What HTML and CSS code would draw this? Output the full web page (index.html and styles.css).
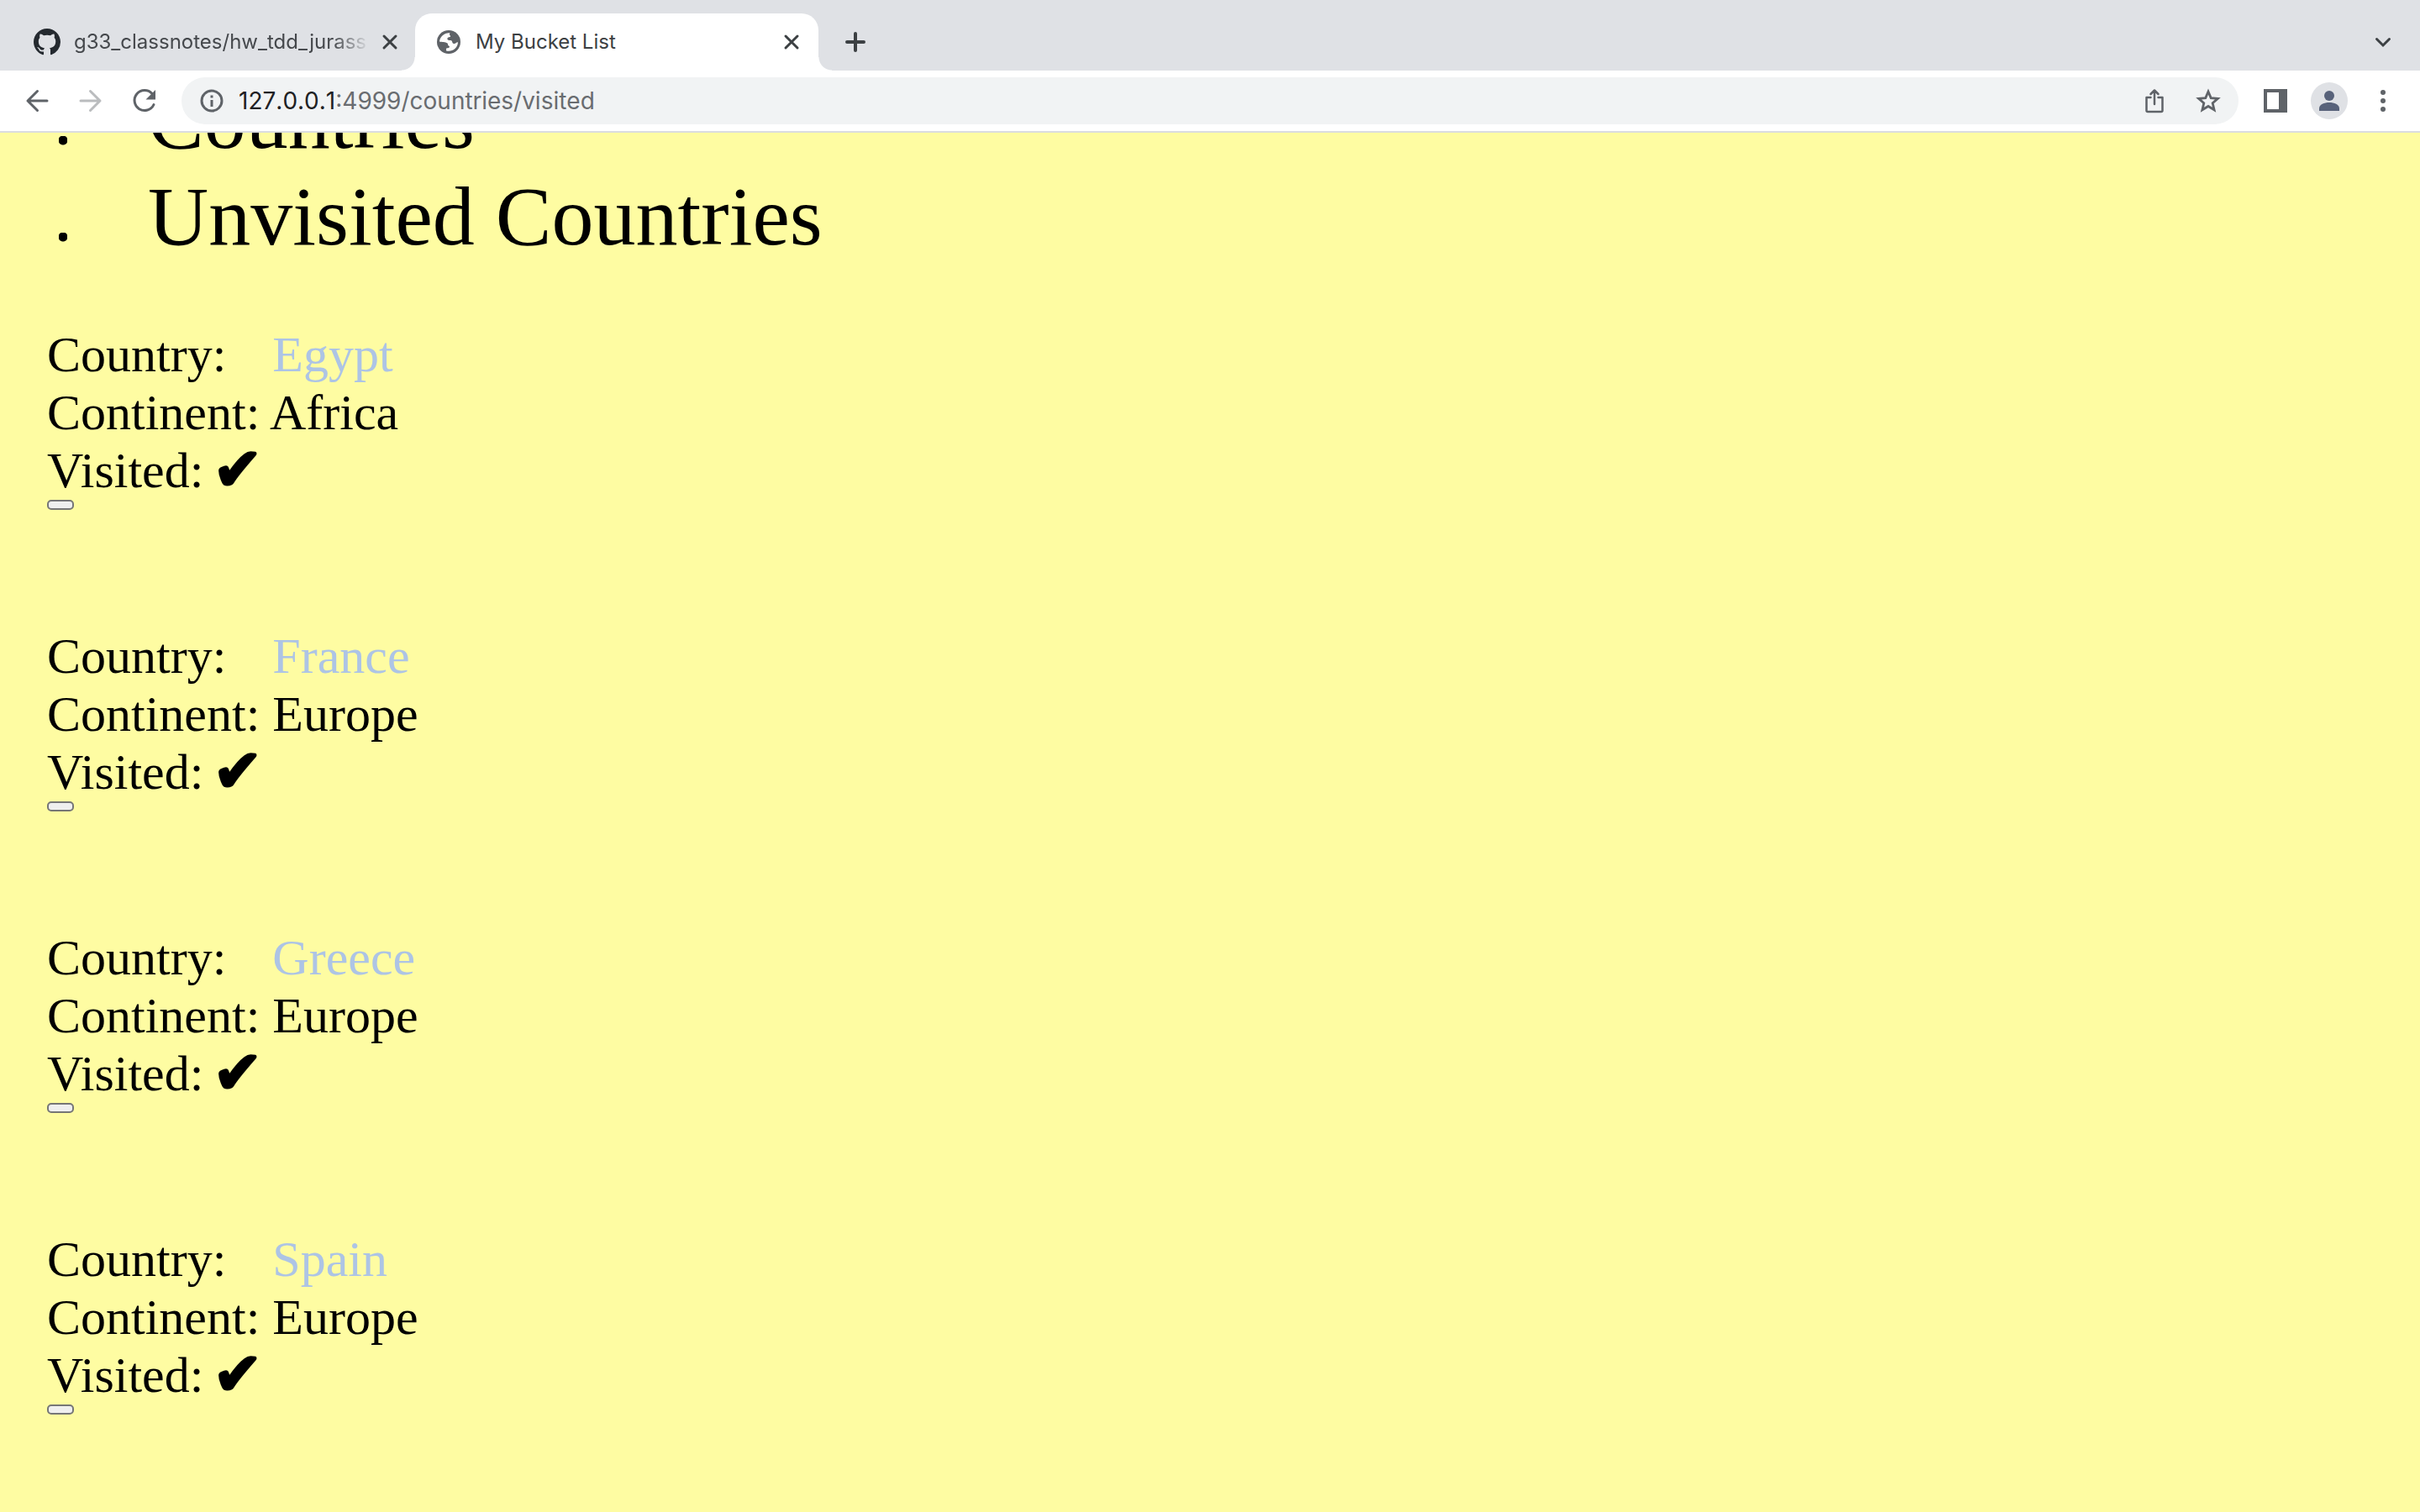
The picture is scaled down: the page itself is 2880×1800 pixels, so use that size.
FILE: index.html
```html
<!DOCTYPE html>
<html lang="en">
<head>
<meta charset="utf-8">
<title>My Bucket List</title>
<link rel="stylesheet" href="styles.css">
</head>
<body>
<header class="browser">
  <div class="tabs">
    <div class="tab">
      <svg class="icon" viewBox="0 0 16 16" fill="#24292f"><path d="M8 0C3.58 0 0 3.58 0 8c0 3.54 2.29 6.53 5.47 7.59.4.07.55-.17.55-.38 0-.19-.01-.82-.01-1.49-2.01.37-2.53-.49-2.69-.94-.09-.23-.48-.94-.82-1.13-.28-.15-.68-.52-.01-.53.63-.01 1.08.58 1.23.82.72 1.21 1.87.87 2.33.66.07-.52.28-.87.51-1.07-1.78-.2-3.64-.89-3.64-3.95 0-.87.31-1.59.82-2.15-.08-.2-.36-1.02.08-2.12 0 0 .67-.21 2.2.82.64-.18 1.32-.27 2-.27s1.36.09 2 .27c1.53-1.04 2.2-.82 2.2-.82.44 1.1.16 1.92.08 2.12.51.56.82 1.27.82 2.15 0 3.07-1.87 3.75-3.65 3.95.29.25.54.73.54 1.48 0 1.07-.01 1.93-.01 2.2 0 .21.15.46.55.38A8.01 8.01 0 0 0 16 8c0-4.42-3.58-8-8-8z"/></svg>
      <span class="tab-title fade">g33_classnotes/hw_tdd_jurass</span>
      <button class="tool" aria-label="Close tab"><svg class="icon" viewBox="0 0 32 32" stroke="#3c4043" stroke-width="3" stroke-linecap="round"><path d="M9 9l14 14M23 9L9 23"/></svg></button>
    </div>
    <div class="tab active">
      <svg class="icon" viewBox="0 0 32 32"><circle cx="16" cy="16" r="14" fill="#5f6368"/><path fill="#fff" d="M17.500 5.200C11.500 4.500 5.500 9 5 15.500C8 16.500 12 15.500 14.500 17.500C15.500 18.500 14.500 20 16 20.500C17.500 21 17 22.500 16 23C14.500 23.300 12.800 23 13 24.500C12.900 25.500 12.900 26 13.200 26.400C19.500 28 26.500 24 27 16.500C25.500 15.500 25 18 22.500 18C20 18 20.500 15.500 19.500 14.500C18.500 13.500 15.500 14.500 14.500 13C14 11.500 15 10.500 16.500 10.300C18 10.200 18.500 9.500 17.800 8.500C17 7.500 16.500 6.500 17.500 5.200Z"/></svg>
      <span class="tab-title">My Bucket List</span>
      <button class="tool" aria-label="Close tab"><svg class="icon" viewBox="0 0 32 32" stroke="#3c4043" stroke-width="3" stroke-linecap="round"><path d="M9 9l14 14M23 9L9 23"/></svg></button>
    </div>
    <button class="tool new-tab" aria-label="New tab"><svg class="icon" viewBox="0 0 32 32" stroke="#3c4043" stroke-width="4" stroke-linecap="round"><path d="M16 6v20M6 16h20"/></svg></button>
    <button class="tool tab-search" aria-label="Search tabs"><svg class="icon" viewBox="0 0 32 32" fill="none" stroke="#3c4043" stroke-width="3" stroke-linecap="round"><path d="M8.500 12.500l7.500 7.500 7.500-7.500"/></svg></button>
  </div>
  <div class="toolbar">
    <nav class="nav-buttons">
      <button class="tool" aria-label="Back"><svg class="icon" viewBox="0 0 32 32" fill="none" stroke="#5f6368" stroke-width="3" stroke-linecap="round" stroke-linejoin="round"><path d="M28 16H5M16.500 4.500L5 16l11.500 11.500"/></svg></button>
      <button class="tool" aria-label="Forward"><svg class="icon" viewBox="0 0 32 32" fill="none" stroke="#babcbe" stroke-width="3" stroke-linecap="round" stroke-linejoin="round"><path d="M4 16h23M15.500 4.500L27 16 15.500 27.500"/></svg></button>
      <button class="tool" aria-label="Reload"><svg class="icon" viewBox="0 0 32 32"><path d="M25 7.500A12 12 0 1 0 27 20.500" fill="none" stroke="#5f6368" stroke-width="3" stroke-linecap="round"/><path d="M29 3v11.500H17.500z" fill="#5f6368"/></svg></button>
    </nav>
    <div class="omnibox">
      <svg class="icon" viewBox="0 0 32 32"><circle cx="16" cy="16" r="12" fill="none" stroke="#5f6368" stroke-width="3"/><path d="M14.500 9.500h3v3h-3zM14.500 15h3v8h-3z" fill="#5f6368"/></svg>
      <div class="address"><label class="host" for="url">127.0.0.1</label><input class="path" id="url" type="text" value=":4999/countries/visited"></div>
      <button class="tool" aria-label="Share"><svg class="icon" viewBox="0 0 32 32" fill="none" stroke="#5f6368" stroke-width="2.500" stroke-linecap="round" stroke-linejoin="round"><path d="M11.500 12H6.500v15.500c0 1 .5 1.500 1.500 1.500h16c1 0 1.500-.5 1.500-1.500V12h-5M16 20V4M11.500 8L16 3.500 20.500 8"/></svg></button>
      <button class="tool" aria-label="Bookmark this page"><svg class="icon" viewBox="0 0 32 32" fill="none" stroke="#5f6368" stroke-width="2.800"><path d="M16 5l3.200 7.600 8.200.7-6.200 5.400 1.900 8.100L16 22.500l-7.100 4.300 1.900-8.100-6.200-5.400 8.200-.7z"/></svg></button>
    </div>
    <div class="actions">
      <button class="tool" aria-label="Side panel"><svg class="icon" viewBox="0 0 32 32"><path fill="#5f6368" fill-rule="evenodd" d="M2 2h28v28H2zM6 6v20h14V6z"/></svg></button>
      <button class="tool avatar" aria-label="Profile"><svg class="icon" viewBox="0 0 32 32" fill="#58627a"><circle cx="16" cy="10" r="6"/><path d="M4 28v-3c0-4.500 6-7 12-7s12 2.500 12 7v3z"/></svg></button>
      <button class="tool" aria-label="Menu"><svg class="icon" viewBox="0 0 32 32" fill="#5f6368"><circle cx="16" cy="6" r="3"/><circle cx="16" cy="16" r="3"/><circle cx="16" cy="26" r="3"/></svg></button>
    </div>
  </div>
</header>
<main class="page">
  <ul class="menu">
    <li><a href="#">Countries</a></li>
    <li><a href="#">Unvisited Countries</a></li>
  </ul>
  <div class="countries">
    <section class="country">
      <p>Country: <a class="name" href="#">Egypt</a></p>
      <p>Continent: Africa</p>
      <p>Visited: <span class="check">✔</span></p>
      <button class="toggle" aria-label="Update Egypt"></button>
    </section>
    <section class="country">
      <p>Country: <a class="name" href="#">France</a></p>
      <p>Continent: Europe</p>
      <p>Visited: <span class="check">✔</span></p>
      <button class="toggle" aria-label="Update France"></button>
    </section>
    <section class="country">
      <p>Country: <a class="name" href="#">Greece</a></p>
      <p>Continent: Europe</p>
      <p>Visited: <span class="check">✔</span></p>
      <button class="toggle" aria-label="Update Greece"></button>
    </section>
    <section class="country">
      <p>Country: <a class="name" href="#">Spain</a></p>
      <p>Continent: Europe</p>
      <p>Visited: <span class="check">✔</span></p>
      <button class="toggle" aria-label="Update Spain"></button>
    </section>
  </div>
</main>
</body>
</html>
```
FILE: styles.css
```css
* { box-sizing: border-box; }

body {
  margin: 0;
  height: 100vh;
  display: flex;
  flex-direction: column;
  overflow: hidden;
  font-family: "Liberation Serif", "Times New Roman", serif;
  color: #000;
}

/* Browser frame */
.browser {
  flex: none;
  font-family: Inter, "Liberation Sans", sans-serif;
  border-bottom: 2px solid #dadce0;
}

.icon {
  display: block;
  flex: none;
  width: 32px;
  height: 32px;
}

.tool {
  flex: none;
  display: flex;
  padding: 0;
  border: 0;
  background: none;
}

.tabs {
  display: flex;
  height: 84px;
  padding: 16px 28px 0 14px;
  background: #dfe1e5;
}

.tab {
  position: relative;
  display: flex;
  align-items: center;
  width: 480px;
  padding: 0 14px 0 26px;
  color: #45484c;
}

.tab.active {
  padding: 0 16px 0 24px;
  border-radius: 20px 20px 0 0;
  background: #fff;
  color: #3c4043;
}

/* Curved feet of the selected tab */
.tab.active::before,
.tab.active::after {
  content: "";
  position: absolute;
  bottom: 0;
  width: 16px;
  height: 16px;
}

.tab.active::before {
  right: 100%;
  background: radial-gradient(circle at 0 0, #dfe1e5 15px, #fff 16px);
}

.tab.active::after {
  left: 100%;
  background: radial-gradient(circle at 100% 0, #dfe1e5 15px, #fff 16px);
}

.tab-title {
  flex: 1;
  margin: 0 8px 0 16px;
  overflow: hidden;
  white-space: nowrap;
  font-size: 24px;
  line-height: 32px;
}

.fade {
  -webkit-mask-image: linear-gradient(to left, transparent, #000 44px);
  mask-image: linear-gradient(to left, transparent, #000 44px);
}

.new-tab { margin: 18px 0 0 28px; }
.tab-search { margin: 18px 0 0 auto; }
.tab-search, .new-tab { align-self: flex-start; }

.toolbar {
  display: flex;
  align-items: center;
  gap: 28px;
  height: 72px;
  padding: 0 28px;
  background: #fff;
}

.nav-buttons {
  display: flex;
  gap: 32px;
}

.omnibox {
  flex: 1;
  display: flex;
  align-items: center;
  gap: 32px;
  height: 56px;
  padding: 0 20px;
  border-radius: 28px;
  background: #f1f3f4;
}

.address {
  flex: 1;
  display: flex;
  align-items: center;
  margin-left: -16px;
  font-size: 28px;
  line-height: 36px;
  font-kerning: none;
}

.host {
  flex: none;
  color: #202124;
}

.path {
  flex: 1;
  height: 36px;
  padding: 0;
  border: 0;
  outline: 0;
  background: none;
  font: inherit;
  color: #696c70;
}

.actions {
  display: flex;
  align-items: center;
  gap: 26px;
}

.avatar {
  padding: 6px;
  border-radius: 50%;
  background: #dfe1e5;
}

/* Page content, scrolled part of the way down */
.page {
  flex: 1;
  min-height: 0;
  overflow: hidden;
  padding: 0 56px;
  background: #fefca2;
}

.menu {
  margin: -73px 0 73px;
  padding: 0 0 0 14px;
  list-style: none;
  font-size: 100px;
  line-height: 115px;
}

.menu li {
  display: flex;
  align-items: baseline;
  gap: 96px;
}

.menu li::before {
  content: "";
  width: 10px;
  height: 14px;
  background: radial-gradient(circle at 5px 5px, #000 5px, transparent 6px);
}

.menu a {
  color: inherit;
  text-decoration: none;
}

.countries {
  display: flex;
  flex-direction: column;
  gap: 140px;
  font-size: 60px;
  line-height: 69px;
}

.country p { margin: 0; }

.name {
  margin-left: 40px;
  color: #adc4e5;
  text-decoration: none;
}

.check {
  margin-left: -4px;
  font-family: "DejaVu Sans", sans-serif;
  font-size: 70px;
  line-height: 1px;
  vertical-align: -3px;
  -webkit-text-stroke: 3px #000;
}

.toggle {
  display: block;
  width: 32px;
  height: 12px;
  padding: 0;
  border: 2px solid #767676;
  border-radius: 5px;
  background: #efefef;
}
```
